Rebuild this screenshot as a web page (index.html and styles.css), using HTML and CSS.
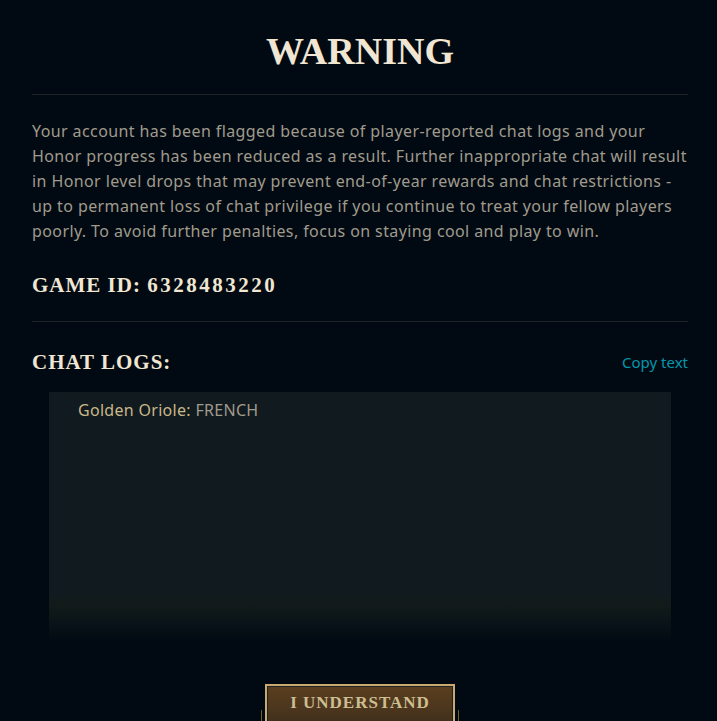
FILE: index.html
```html
<!DOCTYPE html>
<html lang="en">
<head>
  <meta charset="UTF-8">
  <title>Warning</title>
  <link rel="stylesheet" href="styles.css">
</head>
<body>
  <div class="container">
    <h1 class="title">WARNING</h1>
    <hr class="divider">
    <p class="notice">
      Your account has been flagged because of player-reported chat logs and your<br>
      Honor progress has been reduced as a result. Further inappropriate chat will result<br>
      in Honor level drops that may prevent end-of-year rewards and chat restrictions -<br>
      up to permanent loss of chat privilege if you continue to treat your fellow players<br>
      poorly. To avoid further penalties, focus on staying cool and play to win.
    </p>
    <h2 class="game-id">GAME ID: <span class="game-number">6328483220</span></h2>
    <hr class="divider">
    <div class="logs-header">
      <h2 class="logs-title">CHAT LOGS:</h2>
      <a class="copy-link" href="#">Copy text</a>
    </div>
    <div class="chat-box">
      <div class="chat-line"><span class="speaker">Golden Oriole:</span> FRENCH</div>
    </div>
    <div class="actions">
      <button class="understand-btn">I UNDERSTAND</button>
    </div>
  </div>
</body>
</html>
```

FILE: styles.css
```css
body {
  margin: 0;
  background-color: #010a13;
  font-family: "Noto Sans", "Open Sans", sans-serif;
  color: #a09b8c;
  overflow: hidden;
}

.container {
  padding: 0 29px 0 32px;
}

.title {
  margin: 0;
  padding-top: 28px;
  height: 48px;
  text-align: center;
  font-family: "Liberation Serif", serif;
  font-weight: bold;
  font-size: 38px;
  line-height: 46px;
  color: #f0e6d2;
}

.divider {
  border: 0;
  border-top: 1px solid #1e2328;
  margin: 18px 0 0 0;
}

.notice {
  margin: 24px 0 0 0;
  font-size: 16px;
  line-height: 25px;
  letter-spacing: 0.4px;
  white-space: nowrap;
  color: #a09b8c;
}

.game-id,
.logs-title {
  margin: 0;
  font-family: "Liberation Serif", serif;
  font-weight: bold;
  font-size: 21px;
  letter-spacing: 1px;
  color: #f0e6d2;
}

.game-id {
  margin-top: 27px;
  line-height: 28px;
}

.game-number {
  letter-spacing: 2.5px;
}

.game-id + .divider {
  margin-top: 22px;
}

.logs-header {
  display: flex;
  justify-content: space-between;
  align-items: center;
  margin-top: 26px;
}

.logs-title {
  line-height: 28px;
}

.copy-link {
  color: #0397ab;
  font-size: 15px;
  text-decoration: none;
}

.chat-box {
  margin: 16px 17px 0 17px;
  height: 250px;
  padding: 7px 29px;
  box-sizing: border-box;
  background: linear-gradient(to bottom, #111a1f 0%, #111a1f 80%, #121b1a 85%, #010a13 100%);
}

.chat-line {
  font-size: 16px;
  line-height: 22px;
  letter-spacing: 0.3px;
  color: #a09b8c;
}

.speaker {
  color: #c8b78a;
}

.actions {
  display: flex;
  justify-content: center;
  margin-top: 42px;
}

.understand-btn {
  position: relative;
  width: 190px;
  height: 44px;
  border: 2px solid #c8aa6e;
  background: linear-gradient(to bottom, #5b3f1f, #3f2e1c);
  box-shadow: inset 0 0 0 1px #1e2328;
  font-family: "Liberation Serif", serif;
  font-weight: bold;
  font-size: 17px;
  letter-spacing: 1px;
  color: #cdbe91;
  padding: 0 0 6px 0;
  cursor: pointer;
}

/* thin gold rails on each side of the button */
.understand-btn::before,
.understand-btn::after {
  content: "";
  position: absolute;
  top: 24px;
  width: 1px;
  height: 30px;
  background-color: #785a28;
}

.understand-btn::before {
  left: -6px;
}

.understand-btn::after {
  right: -6px;
}
```
